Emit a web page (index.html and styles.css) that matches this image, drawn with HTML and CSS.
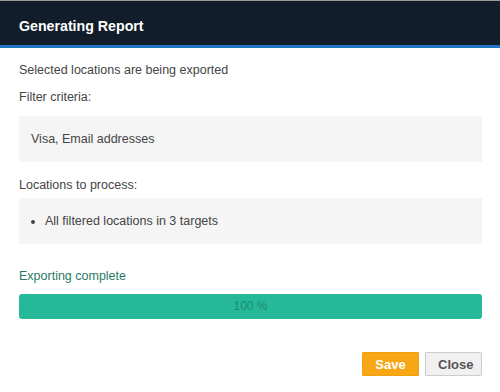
FILE: index.html
```html
<!DOCTYPE html>
<html lang="en">
<head>
    <meta charset="UTF-8" />
    <title>Generating Report</title>
    <link rel="stylesheet" href="styles.css">
</head>
<body>
    <div class="dialog">
        <div class="dialog-header">
            <h1>Generating Report</h1>
        </div>
        <div class="dialog-body">
            <p class="intro">Selected locations are being exported</p>

            <div class="label">Filter criteria:</div>
            <div class="panel">Visa, Email addresses</div>

            <div class="label label-tight">Locations to process:</div>
            <div class="panel">
                <ul class="targets">
                    <li>All filtered locations in 3 targets</li>
                </ul>
            </div>

            <div class="status">Exporting complete</div>
            <div class="progress">
                <div class="progress-bar">100 %</div>
            </div>
        </div>
        <div class="dialog-footer">
            <button class="btn btn-save">Save</button>
            <button class="btn btn-close">Close</button>
        </div>
    </div>
</body>
</html>
```

FILE: styles.css
```css
html, body {
    margin: 0;
    padding: 0;
    background-color: #ffffff;
}
body {
    font-family: "Liberation Sans", Arial, sans-serif;
    font-size: 12.5px;
    color: #444444;
}
.dialog {
    width: 500px;
    height: 392px;
    box-sizing: border-box;
    border-top: 1px solid #9a9a9a;
    display: flex;
    flex-direction: column;
}
.dialog-header {
    background-color: #121d2b;
    height: 44px;
    box-sizing: border-box;
    border-bottom: 3px solid #1f74c4;
    display: flex;
    align-items: center;
    padding: 6px 19px 0;
    height: 47px;
}
.dialog-header h1 {
    margin: 0;
    color: #ffffff;
    font-size: 14.2px;
    font-weight: bold;
}
.dialog-body {
    padding: 14px 18px 0 19px;
}
.intro {
    margin: 0 0 11px;
    line-height: 16px;
}
.label {
    line-height: 16px;
    margin-bottom: 11px;
}
.label-tight {
    margin-bottom: 5px;
}
.panel {
    background-color: #f5f5f5;
    height: 46px;
    display: flex;
    align-items: center;
    padding: 0 12px;
    margin-bottom: 15px;
}
.targets {
    margin: 0;
    padding-left: 14px;
}
.status {
    color: #2b7a66;
    line-height: 16px;
    margin-top: 24px;
    margin-bottom: 10px;
}
.progress {
    height: 25px;
    border-radius: 3px;
    background-color: #e9e9e9;
    overflow: hidden;
}
.progress-bar {
    width: 100%;
    height: 100%;
    background-color: #26b999;
    color: #1e8a70;
    text-align: center;
    line-height: 25px;
    font-size: 12px;
}
.dialog-footer {
    margin-top: auto;
    padding: 0 18px 16px 0;
    display: flex;
    justify-content: flex-end;
    gap: 6px;
}
.btn {
    font-family: "Liberation Sans", Arial, sans-serif;
    font-size: 13px;
    font-weight: bold;
    height: 24px;
    padding: 0 12px;
    border-radius: 1px;
    cursor: pointer;
}
.btn-save {
    width: 57px;
    background-color: #f7a616;
    border: 1px solid #f0a010;
    color: #ffffff;
}
.btn-close {
    width: 57px;
    background-color: #f0f0f0;
    border: 1px solid #cccccc;
    color: #555555;
}
```
